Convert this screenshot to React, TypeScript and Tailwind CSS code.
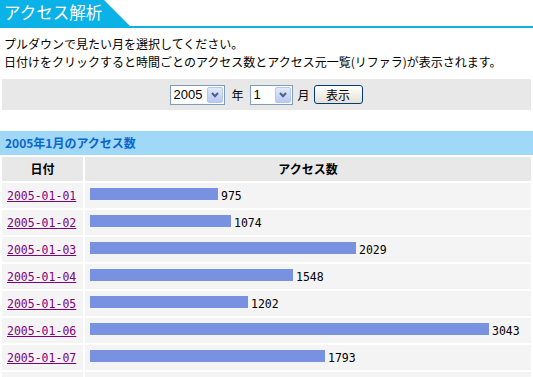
const rows: [string, number][] = [
  ['2005-01-01', 975],
  ['2005-01-02', 1074],
  ['2005-01-03', 2029],
  ['2005-01-04', 1548],
  ['2005-01-05', 1202],
  ['2005-01-06', 3043],
  ['2005-01-07', 1793],
];

function Arrow() {
  return (
    <span className="flex w-[16px] items-center justify-center rounded-[2px] border border-[#b5c6ef] bg-gradient-to-b from-[#e2e9fc] to-[#b8c8f2]">
      <svg width="8" height="6" viewBox="0 0 8 6">
        <path d="M1 1 L4 4.2 L7 1" fill="none" stroke="#4d6185" strokeWidth="2" />
      </svg>
    </span>
  );
}

export default function App() {
  return (
    <div className="h-[377px] w-[533px] overflow-hidden bg-white font-['Noto_Sans_CJK_JP',sans-serif] text-[12px] text-black">
      {/* title tab */}
      <div className="h-[28px] border-b-2 border-[#0ab2e8]">
        <div className="h-[26px] w-[130px] bg-[#0ab2e8] pl-[4px] text-[16.5px] leading-[25px] text-white [clip-path:polygon(0_0,104px_0,130px_26px,0_26px)]">
          アクセス解析
        </div>
      </div>

      <div className="mt-[7px] pl-[4px] leading-[18px]">
        <p>プルダウンで見たい月を選択してください。</p>
        <p>日付けをクリックすると時間ごとのアクセス数とアクセス元一覧(リファラ)が表示されます。</p>
      </div>

      <div className="mx-[2px] mt-[8px] flex h-[31px] items-center justify-center bg-[#e8e8e8]">
        <div className="flex h-[20px] w-[55px] items-stretch border border-[#7f9db9] bg-white p-px">
          <span className="flex-1 pl-[1px] font-['Liberation_Sans',sans-serif] text-[13px] leading-[16px]">2005</span>
          <Arrow />
        </div>
        <span className="ml-[6px]">年</span>
        <div className="ml-[6px] flex h-[20px] w-[43px] items-stretch border border-[#7f9db9] bg-white p-px">
          <span className="flex-1 pl-[2px] font-['Liberation_Sans',sans-serif] text-[13px] leading-[16px]">1</span>
          <Arrow />
        </div>
        <span className="ml-[5px]">月</span>
        <button className="ml-[4px] h-[19px] w-[49px] rounded-[3px] border border-[#003c74] bg-gradient-to-b from-white to-[#e3e1d6] text-[12px] leading-[16px]">
          表示
        </button>
      </div>

      <div className="mt-[21px] h-[24px] bg-[#a0d8f8] pl-[5px] text-[12px] font-bold leading-[23px] text-[#0a66cc]">
        2005年1月のアクセス数
      </div>

      <div className="grid grid-cols-[81px_1fr] gap-[2px] p-[2px]">
        <div className="h-[24px] bg-[#e8e8e8] text-center font-bold leading-[23px]">日付</div>
        <div className="h-[24px] bg-[#e8e8e8] text-center font-bold leading-[23px]">アクセス数</div>
        {rows.map(([d, n]) => (
          <>
            <div key={d} className="h-[25px] bg-[#f4f4f4] pl-[5px] leading-[23px]">
              <a href="#" className="font-['DejaVu_Sans_Mono',monospace] text-[11.5px] text-[#800080] underline">
                {d}
              </a>
            </div>
            <div key={d + 'b'} className="flex h-[25px] items-start bg-[#f4f4f4] pl-[5px] pt-[5px]">
              <div className="h-[12px] bg-[#7891e1]" style={{ width: Math.round((n * 400) / 3050) }} />
              <span className="ml-[3px] font-['DejaVu_Sans_Mono',monospace] text-[11.5px] leading-[16px]">{n}</span>
            </div>
          </>
        ))}
        {/* next row, cut off by the window */}
        <div className="h-[25px] bg-[#f4f4f4]" />
        <div className="h-[25px] bg-[#f4f4f4]" />
      </div>
    </div>
  );
}
